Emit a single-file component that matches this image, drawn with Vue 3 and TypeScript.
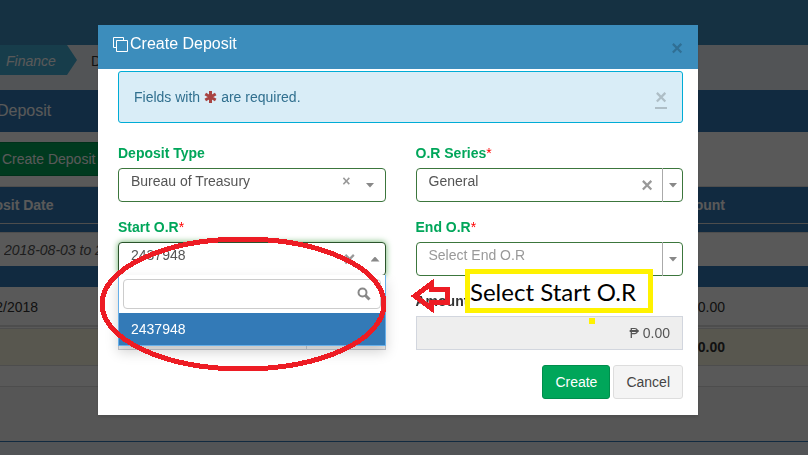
<script setup lang="ts">
import { ref } from 'vue'

const depositType = ref('Bureau of Treasury')
const series = ref('General')
const startOr = ref('2437948')
const endOr = ref('')
const search = ref('')
const receipts = ['2437948']
</script>

<template>
  <div class="page">
    <header class="topbar"></header>
    <nav class="crumbs">
      <a class="crumb-active" href="#finance">Finance</a>
      <a class="crumb" href="#deposit">Deposit</a>
    </nav>
    <main class="panel">
      <h1 class="panel-title">Deposit</h1>
      <div class="toolbar">
        <button class="new-btn" type="button">Create Deposit</button>
      </div>
      <table class="grid">
        <thead>
          <tr class="head"><th>Deposit Date</th><th class="num">Amount</th><th class="tail"></th></tr>
          <tr class="thin"><td colspan="3"></td></tr>
          <tr class="filter">
            <td><input class="range" aria-label="Deposit date range" value="2018-08-03 to 2018-09-03" /></td>
            <td></td><td></td>
          </tr>
        </thead>
        <tbody>
          <tr class="band"><td colspan="3"></td></tr>
          <tr class="row"><td>08/02/2018</td><td class="num">0.00</td><td></td></tr>
          <tr class="total"><td></td><td class="num">0.00</td><td></td></tr>
        </tbody>
      </table>
      <div class="summary"></div>
      <div class="rest"></div>
    </main>
  </div>

  <div class="backdrop">
    <section class="modal" role="dialog" aria-labelledby="modal-title">
      <header class="modal-head">
        <div class="modal-title">
          <svg class="copy" viewBox="0 0 15 15" aria-hidden="true">
            <path d="M3.5 10.500H.5V.5h10v3M3.500 3.500h11v11h-11z" />
          </svg>
          <h2 id="modal-title">Create Deposit</h2>
        </div>
        <button class="x head-x" type="button" aria-label="Close">×</button>
      </header>

      <form class="modal-body" @submit.prevent>
        <div class="alert">
          <span>Fields with</span>
          <svg class="star" viewBox="0 0 12 12" role="img" aria-label="asterisk">
            <path d="M6 0v12M.8 3l10.400 6M.8 9l10.400-6" />
          </svg>
          <span>are required.</span>
          <a class="x alert-x" href="#dismiss" aria-label="Dismiss">×</a>
        </div>

        <div class="fields">
          <div class="field">
            <label for="type">Deposit Type</label>
            <div class="pick">
              <select id="type" v-model="depositType"><option>Bureau of Treasury</option></select>
              <div class="marks small">
                <button class="x" type="button" aria-label="Clear deposit type">×</button>
                <i class="caret"></i>
              </div>
            </div>
          </div>

          <div class="field">
            <label for="series">O.R Series<em>*</em></label>
            <div class="pick">
              <select id="series" v-model="series"><option>General</option></select>
              <div class="marks split">
                <button class="x" type="button" aria-label="Clear series">×</button>
                <span class="cell"><i class="caret"></i></span>
              </div>
            </div>
          </div>

          <div class="field">
            <label for="start">Start O.R<em>*</em></label>
            <div class="pick open">
              <select id="start" v-model="startOr">
                <option v-for="r in receipts" :key="r">{{ r }}</option>
              </select>
              <div class="marks start">
                <button class="x" type="button" aria-label="Clear start">×</button>
                <i class="caret up"></i>
              </div>
              <div class="menu">
                <div class="search">
                  <input v-model="search" type="text" aria-label="Search" />
                  <svg viewBox="0 0 14 14" aria-hidden="true">
                    <circle cx="5.500" cy="5.500" r="4" /><path d="M8.500 8.500l4 4" />
                  </svg>
                </div>
                <button v-for="r in receipts" :key="r" class="option" type="button" @click="startOr = r">{{ r }}</button>
              </div>
            </div>
          </div>

          <div class="field">
            <label for="end">End O.R<em>*</em></label>
            <div class="pick">
              <select id="end" v-model="endOr" class="empty"><option value="">Select End O.R</option></select>
              <div class="marks split"><span class="cell"><i class="caret"></i></span></div>
            </div>
          </div>

          <div class="field">
            <label for="date">Date</label>
            <div class="group"><input id="date" type="text" readonly /><span></span></div>
          </div>

          <div class="field">
            <label class="dark" for="amount">Amount</label>
            <input id="amount" class="amount" type="text" value="₱ 0.00" readonly />
          </div>
        </div>

        <footer class="actions">
          <button class="btn create" type="submit">Create</button>
          <button class="btn cancel" type="button">Cancel</button>
        </footer>
      </form>

      <svg class="ink" viewBox="0 0 600 390" aria-hidden="true">
        <ellipse cx="145" cy="279" rx="141" ry="65" />
        <path d="M317 271l16-12v5.500h16.500v13H333v5.500z" />
      </svg>
      <div class="callout">Select Start O.R</div>
      <i class="dot"></i>
    </section>
  </div>
</template>

<style>
body {
  margin: 0;
  background: #ecf0f5;
}
</style>

<style scoped>
* {
  box-sizing: border-box;
}
.page,
.backdrop,
button,
input,
select {
  font-family: "Liberation Sans", Arial, sans-serif;
  font-size: 14px;
  line-height: 20px;
}
.page {
  height: 100vh;
  overflow: hidden;
  color: #333;
}
.topbar {
  height: 45px;
  background: #3c8dbc;
}
.crumbs {
  display: flex;
  height: 45px;
}
.crumbs a {
  height: 30px;
  line-height: 32px;
  text-decoration: none;
}
.crumb-active {
  width: 77px;
  padding-left: 6px;
  color: #fff;
  font-style: italic;
  background: #42aed6;
  clip-path: polygon(0 0, 67px 0, 100% 50%, 67px 100%, 0 100%);
}
.crumb {
  padding-left: 14px;
  color: #333;
}
.panel {
  margin-left: -40px;
  background: #fff;
  border-bottom: 1px solid #337ab7;
}
.panel-title {
  margin: 0;
  height: 42px;
  padding-left: 37px;
  font-size: 16px;
  font-weight: 400;
  line-height: 42px;
  color: #fff;
  background: #337ab7;
}
.toolbar {
  padding: 10px 0 10px 32px;
}
.new-btn {
  display: block;
  height: 34px;
  padding: 0 12px 0 9px;
  color: #fff;
  background: #00a65a;
  border: 1px solid #008d4c;
}
.grid {
  width: 100%;
  border-spacing: 0;
  border-top: 1px solid #ddd;
}
.grid th,
.grid td {
  padding: 0 8px;
  text-align: left;
}
.grid .head th {
  height: 37px;
  color: #fff;
  background: #337ab7;
  border-bottom: 1px solid #ddd;
}
.grid .num {
  width: 120px;
  text-align: right;
}
.tail {
  width: 75px;
}
.grid .thin td {
  height: 8px;
  background: #337ab7;
}
.grid .filter td {
  height: 34px;
  border-top: 1px solid #ddd;
}
.range {
  width: 220px;
  margin-left: 36px;
  padding: 0;
  border: 0;
  color: #555;
  font-style: italic;
  background: none;
}
.grid .band td {
  height: 21px;
  background: #337ab7;
}
.grid .row td {
  height: 39px;
  padding-top: 2px;
  border-bottom: 1px solid #ddd;
}
.grid .total td {
  height: 40px;
  font-weight: 700;
  background: #fcf8e3;
  background-clip: padding-box;
  border-top: 3px double #ddd;
  border-bottom: 1px solid #ddd;
}
.summary {
  height: 21px;
  border-bottom: 1px solid #ddd;
}
.rest {
  height: 54px;
  background: #f7f7f7;
}

.backdrop {
  position: fixed;
  inset: 0;
  display: flex;
  justify-content: center;
  align-items: flex-start;
  padding: 25px 12px 0 0;
  background: rgba(0, 0, 0, 0.65);
}
.modal {
  position: relative;
  width: 600px;
  background: #fff;
  box-shadow: 0 2px 3px rgba(0, 0, 0, 0.125);
}
.modal-head {
  display: flex;
  align-items: center;
  justify-content: space-between;
  height: 44px;
  padding: 0 15px;
  color: #fff;
  background: #3c8dbc;
}
.modal-title {
  display: flex;
  align-items: center;
  gap: 2px;
  padding-bottom: 6px;
}
.copy {
  width: 15px;
  height: 15px;
  fill: none;
  stroke: #fff;
}
.modal-head h2 {
  margin: 0;
  font-size: 16px;
  font-weight: 400;
}
.x {
  padding: 0;
  border: 0;
  background: none;
  color: #999;
  font-size: 20px;
  font-weight: 700;
  line-height: 20px;
  text-decoration: none;
}
.head-x {
  color: #306f94;
  padding-top: 2px;
}
.modal-body {
  padding: 2px 15px 16px 20px;
}
.alert {
  display: flex;
  align-items: center;
  gap: 4px;
  height: 52px;
  padding: 0 15px;
  color: #31708f;
  background: #d9edf7;
  border: 1px solid #00acd6;
  border-radius: 3px;
}
.star {
  width: 13px;
  height: 12px;
  stroke: #a94442;
  stroke-width: 3;
}
.alert-x {
  margin-left: auto;
  padding-top: 2px;
  color: #aebec6;
  border-bottom: 2px solid #aebec6;
}
.fields {
  display: grid;
  grid-template-columns: 1fr 1fr;
  gap: 15px 30px;
  padding-top: 20px;
}
.field label {
  display: block;
  height: 25px;
  color: #00a65a;
  font-weight: 700;
}
.field label.dark {
  color: #333;
}
.field em {
  color: #f00;
  font-style: normal;
  font-weight: 400;
}
.pick {
  position: relative;
  display: grid;
  height: 34px;
}
.pick select {
  grid-area: 1 / 1;
  width: 100%;
  height: 34px;
  padding: 0 12px 8px;
  appearance: none;
  color: #555;
  background: #fff;
  border: 1px solid #3c763d;
  border-radius: 4px;
}
.pick select.empty {
  color: #999;
}
.pick.open select {
  border-color: #2b542c;
  box-shadow: 0 0 6px #67b168;
}
.marks {
  grid-area: 1 / 1;
  justify-self: end;
  z-index: 1;
  display: flex;
  align-items: center;
}
.marks.small {
  gap: 15px;
  padding-right: 11px;
}
.marks.small .x {
  font-size: 14px;
  padding-bottom: 8px;
}
.marks.start {
  gap: 15px;
  padding-right: 6px;
}
.marks.split {
  gap: 9px;
}
.cell {
  display: grid;
  place-items: center;
  width: 21px;
  height: 34px;
  border-left: 1px solid #aaa;
}
.caret {
  width: 9px;
  height: 5px;
  background: #888;
  clip-path: polygon(0 0, 100% 0, 50% 100%);
}
.caret.up {
  clip-path: polygon(50% 0, 100% 100%, 0 100%);
}
.menu {
  position: absolute;
  z-index: 2;
  top: 33px;
  left: 0;
  right: 0;
  padding-top: 4px;
  background: #fff;
  border: 1px solid #66afe9;
  border-top: 0;
  box-shadow: 0 6px 12px rgba(0, 0, 0, 0.175);
}
.search {
  display: grid;
  align-items: center;
  padding: 0 4px 4px;
}
.search input {
  grid-area: 1 / 1;
  width: 100%;
  height: 30px;
  border: 1px solid #ccc;
  border-radius: 4px;
}
.search svg {
  grid-area: 1 / 1;
  justify-self: end;
  width: 14px;
  height: 14px;
  margin-right: 10px;
  fill: none;
  stroke: #888;
  stroke-width: 2;
}
.search svg path {
  stroke-width: 3;
}
.option {
  display: block;
  width: 100%;
  height: 32px;
  padding: 0 12px;
  border: 0;
  color: #fff;
  background: #337ab7;
  text-align: left;
}
.group {
  display: flex;
  height: 34px;
  background: #eee;
}
.group input {
  flex: 1;
  min-width: 0;
  border: 1px solid #c5c8cf;
  background: #eee;
}
.group span {
  width: 79px;
  border: 1px solid #c5c8cf;
  border-left: 0;
}
.amount {
  display: block;
  width: 100%;
  height: 34px;
  padding: 0 12px;
  color: #555;
  text-align: right;
  background: #eee;
  border: 1px solid #d2d6de;
}
.actions {
  display: flex;
  justify-content: flex-end;
  gap: 3px;
  padding-top: 15px;
}
.btn {
  height: 34px;
  padding: 0 12px;
  border: 1px solid #ddd;
  border-radius: 3px;
}
.create {
  color: #fff;
  background: #00a65a;
  border-color: #008d4c;
}
.cancel {
  color: #444;
  background: #f4f4f4;
}
.ink {
  position: absolute;
  z-index: 3;
  top: 0;
  left: 0;
  width: 600px;
  height: 390px;
  fill: none;
  stroke: #ed1c24;
  stroke-width: 5;
  pointer-events: none;
  shape-rendering: crispEdges;
}
.callout {
  position: absolute;
  z-index: 3;
  top: 244px;
  left: 367px;
  width: 188px;
  height: 44px;
  border: 5px solid #fff200;
  background: #fff;
  color: #000;
  font-family: Lato, sans-serif;
  font-size: 24px;
  line-height: 36px;
  white-space: nowrap;
}
.dot {
  position: absolute;
  z-index: 3;
  top: 293px;
  left: 491px;
  width: 6px;
  height: 6px;
  background: #fff200;
}
</style>
